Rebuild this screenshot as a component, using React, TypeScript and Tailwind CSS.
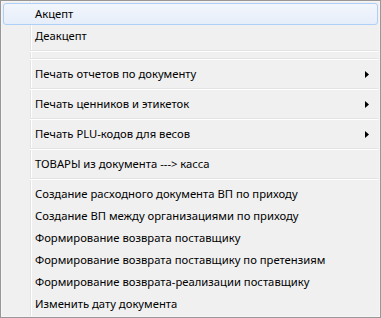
import React from "react";

type Item = { t: "item"; label: string; hl?: boolean; sub?: boolean } | { t: "sep" };

const items: Item[] = [
  { t: "item", label: "Акцепт", hl: true },
  { t: "item", label: "Деакцепт" },
  { t: "sep" },
  { t: "sep" },
  { t: "item", label: "Печать отчетов по документу", sub: true },
  { t: "sep" },
  { t: "item", label: "Печать ценников и этикеток", sub: true },
  { t: "sep" },
  { t: "item", label: "Печать PLU-кодов для весов", sub: true },
  { t: "sep" },
  { t: "item", label: "ТОВАРЫ из документа ---> касса" },
  { t: "sep" },
  { t: "item", label: "Создание расходного документа ВП по приходу" },
  { t: "item", label: "Создание ВП между организациями по приходу" },
  { t: "item", label: "Формирование возврата поставщику" },
  { t: "item", label: "Формирование возврата поставщику по претензиям" },
  { t: "item", label: "Формирование возврата-реализации поставщику" },
  { t: "item", label: "Изменить дату документа" },
];

function Arrow() {
  return (
    <svg width="4" height="7" viewBox="0 0 4 7" className="block">
      <path d="M0 0 L4 3.5 L0 7 Z" fill="#000" />
    </svg>
  );
}

export default function App() {
  return (
    <div className="w-[381px] h-[318px] bg-white">
      <div className="w-[381px] h-[318px] border border-[#979797] bg-[#f0f0f0] p-[2px] bg-[linear-gradient(to_right,#f0f0f0_29px,#e2e3e3_29px,#e2e3e3_30px,#ffffff_30px,#ffffff_31px,#f0f0f0_31px)] shadow-[inset_0_0_0_1px_#f5f5f5] text-[11.25px] text-black font-['Noto_Sans',sans-serif]">
        <div className="flex flex-col">
          {items.map((it, i) =>
            it.t === "sep" ? (
              <div key={i} className="h-[8px] pl-[27px] flex flex-col justify-center">
                <div className="h-px bg-[#e2e3e3]" />
                <div className="h-px bg-white" />
              </div>
            ) : it.hl ? (
              <div
                key={i}
                className="h-[22px] flex items-center pl-[31px] pr-[8px] leading-none rounded-[3px] border border-[#aecff7] bg-[linear-gradient(to_bottom,#f2f6fc,#e6eefa)]"
              >
                <span className="flex-1 whitespace-nowrap">{it.label}</span>
              </div>
            ) : (
              <div key={i} className="h-[22px] flex items-center pl-[32px] pr-[9px] leading-none">
                <span className="flex-1 whitespace-nowrap">{it.label}</span>
                {it.sub && <Arrow />}
              </div>
            )
          )}
        </div>
      </div>
    </div>
  );
}
